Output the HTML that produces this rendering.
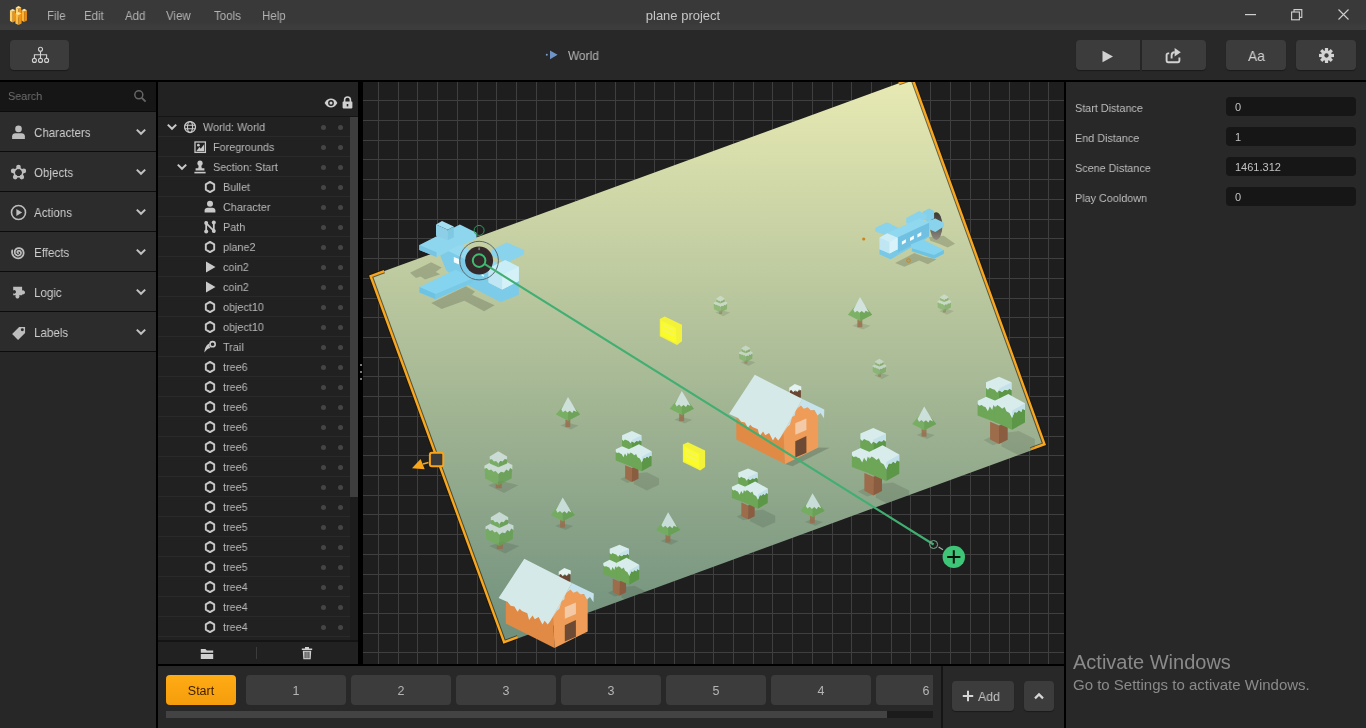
<!DOCTYPE html>
<html><head><meta charset="utf-8"><title>plane project</title>
<style>
*{box-sizing:border-box;margin:0;padding:0}
html,body{width:1366px;height:728px;overflow:hidden;background:#000;font-family:"Liberation Sans",sans-serif;color:#c8c8c8;font-size:12px}
.abs{position:absolute}
.t{display:inline-block;transform:scaleX(.94);transform-origin:0 50%;white-space:nowrap}
#title{left:0;top:0;width:1366px;height:30px;background:linear-gradient(#393939 0,#393939 22px,#3d3d3d 27px,#3c3c3c 30px)}
#title .m{position:absolute;top:8.7px;font-size:12.5px;color:#b2b2b2;line-height:15px;transform:scaleX(.92);transform-origin:0 50%;white-space:nowrap}
#tool{left:0;top:30px;width:1366px;height:50px;background:#282828}
.tb{position:absolute;background:#3c3c3c;border-radius:4px;box-shadow:0 1px 1px rgba(0,0,0,.35)}
#left{left:0;top:82px;width:156px;height:646px;background:#272727}
#lb{left:0;top:29px;width:156px;height:241px;background:#0c0c0c}
#search{left:0;top:0;width:156px;height:29px;background:#161616;color:#6f6f6f;font-size:11px}
.cat{position:absolute;left:0;width:156px;height:39px;background:#2c2c2c;font-size:13px;color:#cdcdcd}
.cat span{position:absolute;left:34px;top:13px;line-height:16px;transform:scaleX(.89)}
#tree{left:158px;top:82px;width:200px;height:582px;background:#212121}
#thead{left:0;top:0;width:200px;height:34px;background:#222}
.row{position:absolute;left:0;width:192px;height:20px;border-bottom:1px solid #2a2a2a;font-size:11.5px;color:#b9b9b9}
.row span{position:absolute;top:3.6px;line-height:13px}
.row i{position:absolute;top:7.5px;width:5px;height:5px;border-radius:3px;background:#454545}
#canvas{left:363px;top:82px;width:701px;height:582px;background:#1e1e1e;overflow:hidden}
#bottom{left:158px;top:666px;width:906px;height:62px;background:#282828}
.sb{position:absolute;top:9px;width:100px;height:30px;border-radius:4px;background:#3c3c3c;color:#b4b4b4;font-size:12.5px;text-align:center;line-height:32px}
#right{left:1066px;top:82px;width:300px;height:646px;background:#282828}
.lbl{position:absolute;left:9px;font-size:11.5px;color:#bebebe;line-height:14px;margin-top:0;transform:scaleX(.94);transform-origin:0 50%;white-space:nowrap}
.inp{position:absolute;left:160px;width:130px;height:19px;border-radius:4px;background:#161616;color:#c2c2c2;font-size:11px;line-height:21px;padding-left:9px}
.t,.lbl,.m,.inp,.sb,.aw{will-change:transform}
</style></head><body>
<div id="title" class="abs"><svg class="abs" style="left:4px;top:2px" width="30" height="26" viewBox="0 0 30 26" ><polygon points="11.75,5.4 14.5,6.8 14.5,15.4 11.75,14" fill="#ffd26e"/><polygon points="14.5,6.8 17.25,5.4 17.25,14 14.5,15.4" fill="#ee9415"/><polygon points="11.75,5.4 14.5,4 17.25,5.4 14.5,6.8" fill="#ffe39a"/><polygon points="5.95,8.3 8.7,9.7 8.7,20.4 5.95,19" fill="#ffd26e"/><polygon points="8.7,9.7 11.45,8.3 11.45,19 8.7,20.4" fill="#ee9415"/><polygon points="5.95,8.3 8.7,6.9 11.45,8.3 8.7,9.7" fill="#ffe39a"/><polygon points="17.45,8.2 20.2,9.6 20.2,20 17.45,18.6" fill="#fbb437"/><polygon points="20.2,9.6 22.95,8.2 22.95,18.6 20.2,20" fill="#e88a10"/><polygon points="17.45,8.2 20.2,6.8 22.95,8.2 20.2,9.6" fill="#ffe39a"/><polygon points="11.4,11.6 14.5,13.1 14.5,23.1 11.4,21.6" fill="#fcbe48"/><polygon points="14.5,13.1 17.6,11.6 17.6,21.6 14.5,23.1" fill="#f09612"/><polygon points="11.4,11.6 14.5,10.1 17.6,11.6 14.5,13.1" fill="#ffe39a"/></svg><svg class="abs" style="left:1245px;top:14px" width="12" height="2" viewBox="0 0 12 2" ><rect x="0" y="0" width="11" height="1.2" fill="#cfcfcf"/></svg><svg class="abs" style="left:1291px;top:9px" width="12" height="12" viewBox="0 0 12 12" ><rect x="0.6" y="3" width="7.8" height="7.8" fill="none" stroke="#cfcfcf" stroke-width="1.1"/><path d="M3 3V0.6h7.8v7.8H8.4" fill="none" stroke="#cfcfcf" stroke-width="1.1"/></svg><svg class="abs" style="left:1338px;top:9px" width="11" height="11" viewBox="0 0 11 11" ><path d="M0.5 0.5L10.5 10.5M10.5 0.5L0.5 10.5" stroke="#cfcfcf" stroke-width="1.1"/></svg>
<span class="m" style="left:46.5px">File</span><span class="m" style="left:83.5px">Edit</span><span class="m" style="left:124.5px">Add</span><span class="m" style="left:166px">View</span><span class="m" style="left:214px">Tools</span><span class="m" style="left:262px">Help</span>
<span class="m" style="left:583px;width:200px;text-align:center;font-size:13px;top:8px;line-height:16px;color:#c6c6c6;transform:none">plane project</span>
</div>
<div id="tool" class="abs">
<div class="tb" style="left:10px;top:10px;width:59px;height:30px"></div>
<div class="tb" style="left:1076px;top:10px;width:64px;height:30px;border-radius:4px 0 0 4px"></div>
<div class="tb" style="left:1142px;top:10px;width:64px;height:30px;border-radius:0 4px 4px 0"></div>
<div class="tb" style="left:1226px;top:10px;width:60px;height:30px"></div>
<div class="tb" style="left:1296px;top:10px;width:60px;height:30px"></div>
<span class="abs t" style="left:568px;top:19px;font-size:12.5px;color:#b8b8b8;line-height:15px;transform:scaleX(.95)">World</span><svg class="abs" style="left:31px;top:16px" width="19" height="18" viewBox="0 0 19 18" ><g fill="none" stroke="#d2d2d2" stroke-width="1.1"><circle cx="9.5" cy="3.2" r="2"/><circle cx="3.4" cy="14.4" r="2"/><circle cx="9.5" cy="14.4" r="2"/><circle cx="15.6" cy="14.4" r="2"/><path d="M9.5 5.2v7.2M3.4 12.4V8.8h12.2v3.6"/></g></svg><svg class="abs" style="left:545px;top:19px" width="14" height="12" viewBox="0 0 14 12" ><circle cx="1.8" cy="5.8" r="1" fill="#7a9fd0"/><polygon points="5,1.4 12.6,5.8 5,10.2" fill="#6f95c8"/></svg><svg class="abs" style="left:1101px;top:19.6px" width="13" height="13" viewBox="0 0 13 13" ><polygon points="1.5,0.8 12,6.5 1.5,12.2" fill="#d2d2d2"/></svg><svg class="abs" style="left:1165px;top:17px" width="18" height="17" viewBox="0 0 18 17" ><path d="M4.2 6.4H3.2a1.6 1.6 0 0 0-1.6 1.6v5.6a1.6 1.6 0 0 0 1.6 1.6h9.6a1.6 1.6 0 0 0 1.6-1.6V10.6" fill="none" stroke="#d2d2d2" stroke-width="1.9"/><path d="M6.6 11.6V8.2c0-1.8 1.2-3 3.2-3" fill="none" stroke="#d2d2d2" stroke-width="1.9"/><polygon points="9.6,1 15.8,5.2 9.6,9.4" fill="#d2d2d2"/></svg><span class="abs t" style="left:1247.5px;top:16.6px;font-size:15px;line-height:18px;color:#d2d2d2;transform:scaleX(.92)">Aa</span><svg class="abs" style="left:1318.6px;top:18.2px" width="15" height="15" viewBox="0 0 16 16" ><g transform="translate(8 8)" fill="#d2d2d2"><circle r="5.6"/><rect x="-1.7" y="-8" width="3.4" height="4" transform="rotate(0)"/><rect x="-1.7" y="-8" width="3.4" height="4" transform="rotate(45)"/><rect x="-1.7" y="-8" width="3.4" height="4" transform="rotate(90)"/><rect x="-1.7" y="-8" width="3.4" height="4" transform="rotate(135)"/><rect x="-1.7" y="-8" width="3.4" height="4" transform="rotate(180)"/><rect x="-1.7" y="-8" width="3.4" height="4" transform="rotate(225)"/><rect x="-1.7" y="-8" width="3.4" height="4" transform="rotate(270)"/><rect x="-1.7" y="-8" width="3.4" height="4" transform="rotate(315)"/><circle r="2.3" fill="#3c3c3c"/></g></svg>
</div>
<div id="left" class="abs">
<div id="lb" class="abs"></div><div id="search" class="abs"><span class="abs t" style="left:8px;top:7px;line-height:14px;font-size:11.5px">Search</span></div>
<svg class="abs" style="left:133px;top:7px" width="14" height="14" viewBox="0 0 14 14" ><circle cx="5.8" cy="5.8" r="4" fill="none" stroke="#666" stroke-width="1.5"/><path d="M8.8 8.8L12.6 12.6" stroke="#666" stroke-width="1.9"/></svg><div class="cat" style="top:30px"><svg class="abs" style="left:9.5px;top:11.5px" width="17" height="17" viewBox="0 0 16 16" ><circle cx="8" cy="4.6" r="3.1" fill="#bdbdbd"/><path d="M2 14v-2.4c0-1.8 1.4-2.8 3-2.8h6c1.6 0 3 1 3 2.8V14z" fill="#bdbdbd"/></svg><span class="t">Characters</span><svg class="abs" style="left:135px;top:15px" width="12" height="10" viewBox="0 0 12 10" ><path d="M1.8 2.6L6 6.8L10.2 2.6" fill="none" stroke="#c2c2c2" stroke-width="2" stroke-linecap="butt"/></svg></div><div class="cat" style="top:70px"><svg class="abs" style="left:9.5px;top:11.5px" width="17" height="17" viewBox="0 0 16 16" ><polygon points="8,3.2 12.6,6.6 10.9,12 5.1,12 3.4,6.6" fill="none" stroke="#bdbdbd" stroke-width="1.5"/><circle cx="8" cy="2.8" r="2.2" fill="#bdbdbd"/><circle cx="13" cy="6.5" r="2.2" fill="#bdbdbd"/><circle cx="11.1" cy="12.3" r="2.2" fill="#bdbdbd"/><circle cx="4.9" cy="12.3" r="2.2" fill="#bdbdbd"/><circle cx="3" cy="6.5" r="2.2" fill="#bdbdbd"/></svg><span class="t">Objects</span><svg class="abs" style="left:135px;top:15px" width="12" height="10" viewBox="0 0 12 10" ><path d="M1.8 2.6L6 6.8L10.2 2.6" fill="none" stroke="#c2c2c2" stroke-width="2" stroke-linecap="butt"/></svg></div><div class="cat" style="top:110px"><svg class="abs" style="left:9.5px;top:11.5px" width="17" height="17" viewBox="0 0 16 16" ><circle cx="8" cy="8" r="6.6" fill="none" stroke="#bdbdbd" stroke-width="1.5"/><polygon points="6,4.8 11.4,8 6,11.2" fill="#bdbdbd"/></svg><span class="t">Actions</span><svg class="abs" style="left:135px;top:15px" width="12" height="10" viewBox="0 0 12 10" ><path d="M1.8 2.6L6 6.8L10.2 2.6" fill="none" stroke="#c2c2c2" stroke-width="2" stroke-linecap="butt"/></svg></div><div class="cat" style="top:150px"><svg class="abs" style="left:9.5px;top:11.5px" width="17" height="17" viewBox="0 0 16 16" ><path d="M7.65 8.49 L7.47 8.45 L7.30 8.36 L7.15 8.22 L7.03 8.02 L6.96 7.78 L6.95 7.51 L7.02 7.22 L7.16 6.94 L7.39 6.70 L7.68 6.50 L8.04 6.37 L8.43 6.33 L8.84 6.39 L9.25 6.56 L9.62 6.83 L9.93 7.19 L10.16 7.64 L10.28 8.15 L10.27 8.69 L10.14 9.24 L9.86 9.75 L9.47 10.21 L8.96 10.58 L8.35 10.82 L7.69 10.92 L7.00 10.86 L6.33 10.63 L5.70 10.25 L5.17 9.71 L4.77 9.05 L4.52 8.29 L4.45 7.47 L4.58 6.64 L4.90 5.84 L5.42 5.12 L6.10 4.53 L6.91 4.10 L7.83 3.86 L8.80 3.84 L9.77 4.04 L10.68 4.48 L11.49 5.12 L12.13 5.95 L12.58 6.93 L12.80 8.00 L12.76 9.12 L12.46 10.22 L11.91 11.24 L11.12 12.12 L10.14 12.81 L9.00 13.27 L7.77 13.45 L6.50 13.34 L5.28 12.94 L4.16 12.26 L3.21 11.32 L2.49 10.17 L2.05 8.87 L1.92 7.48 L2.11 6.08" fill="none" stroke="#bdbdbd" stroke-width="1.7" stroke-linecap="round"/></svg><span class="t">Effects</span><svg class="abs" style="left:135px;top:15px" width="12" height="10" viewBox="0 0 12 10" ><path d="M1.8 2.6L6 6.8L10.2 2.6" fill="none" stroke="#c2c2c2" stroke-width="2" stroke-linecap="butt"/></svg></div><div class="cat" style="top:190px"><svg class="abs" style="left:9.5px;top:11.5px" width="17" height="17" viewBox="0 0 16 16" ><path d="M3 2.6h8.4v3.6a1.9 1.9 0 1 1 0 3.4v1H8.6a1.9 1.9 0 1 1-3.2 0H3V8.8a1.7 1.7 0 1 0 0-2.8z" fill="#bdbdbd"/></svg><span class="t">Logic</span><svg class="abs" style="left:135px;top:15px" width="12" height="10" viewBox="0 0 12 10" ><path d="M1.8 2.6L6 6.8L10.2 2.6" fill="none" stroke="#c2c2c2" stroke-width="2" stroke-linecap="butt"/></svg></div><div class="cat" style="top:230px"><svg class="abs" style="left:9.5px;top:11.5px" width="17" height="17" viewBox="0 0 16 16" ><path d="M2 9.4L8.6 2.8h5.6v5.6L7.6 15z" fill="#bdbdbd"/><circle cx="11.6" cy="5.4" r="1.4" fill="#2b2b2b"/></svg><span class="t">Labels</span><svg class="abs" style="left:135px;top:15px" width="12" height="10" viewBox="0 0 12 10" ><path d="M1.8 2.6L6 6.8L10.2 2.6" fill="none" stroke="#c2c2c2" stroke-width="2" stroke-linecap="butt"/></svg></div>
</div>
<div id="tree" class="abs">
<div id="thead" class="abs"></div>
<svg class="abs" style="left:165.8px;top:16px" width="14" height="10" viewBox="0 0 14 10" ><path d="M0.6 5C2.4 1.8 4.6 0.6 7 0.6S11.6 1.8 13.4 5C11.6 8.2 9.4 9.4 7 9.4S2.4 8.2 0.6 5z" fill="#d0d0d0"/><circle cx="7" cy="5" r="2.9" fill="#212121"/><circle cx="7" cy="5" r="1.5" fill="#d0d0d0"/></svg><svg class="abs" style="left:184.3px;top:14px" width="11" height="13" viewBox="0 0 11 13" ><path d="M2.6 6V3.8C2.6 2 3.8 1 5.5 1S8.4 2 8.4 3.8V6" fill="none" stroke="#d0d0d0" stroke-width="1.6"/><rect x="0.6" y="5.6" width="9.8" height="6.8" rx="0.8" fill="#d0d0d0"/><rect x="4.7" y="8" width="1.6" height="2.4" fill="#212121"/></svg><div class="abs" style="left:0;top:34px;width:200px;height:1px;background:#151515"></div><div class="abs" style="left:192px;top:35px;width:8px;height:523px;background:#1d1d1d"></div><div class="abs" style="left:192px;top:35px;width:8px;height:380px;background:#3e3e3e"></div><div class="row" style="top:35px"><svg class="abs" style="left:8.3px;top:5px" width="12" height="10" viewBox="0 0 12 10" ><path d="M1.8 2.6L6 6.8L10.2 2.6" fill="none" stroke="#c9c9c9" stroke-width="2" stroke-linecap="butt"/></svg><svg class="abs" style="left:24.86px;top:2.96px" width="14.08" height="14.08" viewBox="0 0 16 16" ><circle cx="8" cy="8" r="6.2" fill="none" stroke="#c9c9c9" stroke-width="1.5"/><ellipse cx="8" cy="8" rx="2.9" ry="6.2" fill="none" stroke="#c9c9c9" stroke-width="1.3"/><path d="M2 6h12M2 10h12" stroke="#c9c9c9" stroke-width="1.3" fill="none"/></svg><span class="t" style="left:44.5px">World: World</span><i style="left:163px"></i><i style="left:180px"></i></div><div class="row" style="top:55px"><svg class="abs" style="left:34.8px;top:2.8px" width="14.4" height="14.4" viewBox="0 0 16 16" ><rect x="2.2" y="2.2" width="11.6" height="11.6" fill="none" stroke="#c9c9c9" stroke-width="1.4"/><circle cx="6" cy="5.8" r="1.5" fill="#c9c9c9"/><polygon points="3.6,12.4 7.2,7.8 8.6,9.8 12.4,4.8 12.4,12.4" fill="#c9c9c9"/></svg><span class="t" style="left:54.6px">Foregrounds</span><i style="left:163px"></i><i style="left:180px"></i></div><div class="row" style="top:75px"><svg class="abs" style="left:18.4px;top:5px" width="12" height="10" viewBox="0 0 12 10" ><path d="M1.8 2.6L6 6.8L10.2 2.6" fill="none" stroke="#c9c9c9" stroke-width="2" stroke-linecap="butt"/></svg><svg class="abs" style="left:34px;top:2px" width="16" height="16" viewBox="0 0 16 16" ><circle cx="8" cy="4.2" r="2.6" fill="#c9c9c9"/><path d="M6.8 6h2.4l0.6 3.2h2.6v2.4H3.6V9.2h2.6z" fill="#c9c9c9"/><rect x="2.4" y="12.8" width="11.2" height="1.6" fill="#c9c9c9"/></svg><span class="t" style="left:54.6px">Section: Start</span><i style="left:163px"></i><i style="left:180px"></i></div><div class="row" style="top:95px"><svg class="abs" style="left:44px;top:2px" width="16" height="16" viewBox="0 0 16 16" ><polygon points="8,2.9 12.2,5.4 12.2,10.6 8,13.1 3.8,10.6 3.8,5.4" fill="none" stroke="#c9c9c9" stroke-width="1.9" stroke-linejoin="round"/></svg><span class="t" style="left:64.6px">Bullet</span><i style="left:163px"></i><i style="left:180px"></i></div><div class="row" style="top:115px"><svg class="abs" style="left:44px;top:2px" width="16" height="16" viewBox="0 0 16 16" ><circle cx="8" cy="4.8" r="3" fill="#c9c9c9"/><path d="M2.6 13.6v-2.2c0-1.6 1.4-2.6 3-2.6h4.8c1.6 0 3 1 3 2.6v2.2z" fill="#c9c9c9"/></svg><span class="t" style="left:64.6px">Character</span><i style="left:163px"></i><i style="left:180px"></i></div><div class="row" style="top:135px"><svg class="abs" style="left:44px;top:2px" width="16" height="16" viewBox="0 0 16 16" ><path d="M4.2 12.5V4.2L11.8 11.8V3.6" fill="none" stroke="#c9c9c9" stroke-width="1.8"/><circle cx="4.2" cy="12.6" r="2" fill="#c9c9c9"/><circle cx="4.2" cy="4" r="2" fill="#c9c9c9"/><circle cx="11.8" cy="12" r="2" fill="#c9c9c9"/><circle cx="11.8" cy="3.6" r="2" fill="#c9c9c9"/></svg><span class="t" style="left:64.6px">Path</span><i style="left:163px"></i><i style="left:180px"></i></div><div class="row" style="top:155px"><svg class="abs" style="left:44px;top:2px" width="16" height="16" viewBox="0 0 16 16" ><polygon points="8,2.9 12.2,5.4 12.2,10.6 8,13.1 3.8,10.6 3.8,5.4" fill="none" stroke="#c9c9c9" stroke-width="1.9" stroke-linejoin="round"/></svg><span class="t" style="left:64.6px">plane2</span><i style="left:163px"></i><i style="left:180px"></i></div><div class="row" style="top:175px"><svg class="abs" style="left:44px;top:2px" width="16" height="16" viewBox="0 0 16 16" ><polygon points="4,2.5 13.5,8 4,13.5" fill="#c9c9c9"/></svg><span class="t" style="left:64.6px">coin2</span><i style="left:163px"></i><i style="left:180px"></i></div><div class="row" style="top:195px"><svg class="abs" style="left:44px;top:2px" width="16" height="16" viewBox="0 0 16 16" ><polygon points="4,2.5 13.5,8 4,13.5" fill="#c9c9c9"/></svg><span class="t" style="left:64.6px">coin2</span><i style="left:163px"></i><i style="left:180px"></i></div><div class="row" style="top:215px"><svg class="abs" style="left:44px;top:2px" width="16" height="16" viewBox="0 0 16 16" ><polygon points="8,2.9 12.2,5.4 12.2,10.6 8,13.1 3.8,10.6 3.8,5.4" fill="none" stroke="#c9c9c9" stroke-width="1.9" stroke-linejoin="round"/></svg><span class="t" style="left:64.6px">object10</span><i style="left:163px"></i><i style="left:180px"></i></div><div class="row" style="top:235px"><svg class="abs" style="left:44px;top:2px" width="16" height="16" viewBox="0 0 16 16" ><polygon points="8,2.9 12.2,5.4 12.2,10.6 8,13.1 3.8,10.6 3.8,5.4" fill="none" stroke="#c9c9c9" stroke-width="1.9" stroke-linejoin="round"/></svg><span class="t" style="left:64.6px">object10</span><i style="left:163px"></i><i style="left:180px"></i></div><div class="row" style="top:255px"><svg class="abs" style="left:44px;top:2px" width="16" height="16" viewBox="0 0 16 16" ><circle cx="10.6" cy="5.2" r="2.6" fill="none" stroke="#c9c9c9" stroke-width="1.6"/><path d="M2.4 13.6c0.2-4.6 2-8.2 5.6-9.4c-1 1.6-0.8 3.6 0.6 4.8c-3 0.4-4.6 2.2-6.2 4.6z" fill="#c9c9c9"/></svg><span class="t" style="left:64.6px">Trail</span><i style="left:163px"></i><i style="left:180px"></i></div><div class="row" style="top:275px"><svg class="abs" style="left:44px;top:2px" width="16" height="16" viewBox="0 0 16 16" ><polygon points="8,2.9 12.2,5.4 12.2,10.6 8,13.1 3.8,10.6 3.8,5.4" fill="none" stroke="#c9c9c9" stroke-width="1.9" stroke-linejoin="round"/></svg><span class="t" style="left:64.6px">tree6</span><i style="left:163px"></i><i style="left:180px"></i></div><div class="row" style="top:295px"><svg class="abs" style="left:44px;top:2px" width="16" height="16" viewBox="0 0 16 16" ><polygon points="8,2.9 12.2,5.4 12.2,10.6 8,13.1 3.8,10.6 3.8,5.4" fill="none" stroke="#c9c9c9" stroke-width="1.9" stroke-linejoin="round"/></svg><span class="t" style="left:64.6px">tree6</span><i style="left:163px"></i><i style="left:180px"></i></div><div class="row" style="top:315px"><svg class="abs" style="left:44px;top:2px" width="16" height="16" viewBox="0 0 16 16" ><polygon points="8,2.9 12.2,5.4 12.2,10.6 8,13.1 3.8,10.6 3.8,5.4" fill="none" stroke="#c9c9c9" stroke-width="1.9" stroke-linejoin="round"/></svg><span class="t" style="left:64.6px">tree6</span><i style="left:163px"></i><i style="left:180px"></i></div><div class="row" style="top:335px"><svg class="abs" style="left:44px;top:2px" width="16" height="16" viewBox="0 0 16 16" ><polygon points="8,2.9 12.2,5.4 12.2,10.6 8,13.1 3.8,10.6 3.8,5.4" fill="none" stroke="#c9c9c9" stroke-width="1.9" stroke-linejoin="round"/></svg><span class="t" style="left:64.6px">tree6</span><i style="left:163px"></i><i style="left:180px"></i></div><div class="row" style="top:355px"><svg class="abs" style="left:44px;top:2px" width="16" height="16" viewBox="0 0 16 16" ><polygon points="8,2.9 12.2,5.4 12.2,10.6 8,13.1 3.8,10.6 3.8,5.4" fill="none" stroke="#c9c9c9" stroke-width="1.9" stroke-linejoin="round"/></svg><span class="t" style="left:64.6px">tree6</span><i style="left:163px"></i><i style="left:180px"></i></div><div class="row" style="top:375px"><svg class="abs" style="left:44px;top:2px" width="16" height="16" viewBox="0 0 16 16" ><polygon points="8,2.9 12.2,5.4 12.2,10.6 8,13.1 3.8,10.6 3.8,5.4" fill="none" stroke="#c9c9c9" stroke-width="1.9" stroke-linejoin="round"/></svg><span class="t" style="left:64.6px">tree6</span><i style="left:163px"></i><i style="left:180px"></i></div><div class="row" style="top:395px"><svg class="abs" style="left:44px;top:2px" width="16" height="16" viewBox="0 0 16 16" ><polygon points="8,2.9 12.2,5.4 12.2,10.6 8,13.1 3.8,10.6 3.8,5.4" fill="none" stroke="#c9c9c9" stroke-width="1.9" stroke-linejoin="round"/></svg><span class="t" style="left:64.6px">tree5</span><i style="left:163px"></i><i style="left:180px"></i></div><div class="row" style="top:415px"><svg class="abs" style="left:44px;top:2px" width="16" height="16" viewBox="0 0 16 16" ><polygon points="8,2.9 12.2,5.4 12.2,10.6 8,13.1 3.8,10.6 3.8,5.4" fill="none" stroke="#c9c9c9" stroke-width="1.9" stroke-linejoin="round"/></svg><span class="t" style="left:64.6px">tree5</span><i style="left:163px"></i><i style="left:180px"></i></div><div class="row" style="top:435px"><svg class="abs" style="left:44px;top:2px" width="16" height="16" viewBox="0 0 16 16" ><polygon points="8,2.9 12.2,5.4 12.2,10.6 8,13.1 3.8,10.6 3.8,5.4" fill="none" stroke="#c9c9c9" stroke-width="1.9" stroke-linejoin="round"/></svg><span class="t" style="left:64.6px">tree5</span><i style="left:163px"></i><i style="left:180px"></i></div><div class="row" style="top:455px"><svg class="abs" style="left:44px;top:2px" width="16" height="16" viewBox="0 0 16 16" ><polygon points="8,2.9 12.2,5.4 12.2,10.6 8,13.1 3.8,10.6 3.8,5.4" fill="none" stroke="#c9c9c9" stroke-width="1.9" stroke-linejoin="round"/></svg><span class="t" style="left:64.6px">tree5</span><i style="left:163px"></i><i style="left:180px"></i></div><div class="row" style="top:475px"><svg class="abs" style="left:44px;top:2px" width="16" height="16" viewBox="0 0 16 16" ><polygon points="8,2.9 12.2,5.4 12.2,10.6 8,13.1 3.8,10.6 3.8,5.4" fill="none" stroke="#c9c9c9" stroke-width="1.9" stroke-linejoin="round"/></svg><span class="t" style="left:64.6px">tree5</span><i style="left:163px"></i><i style="left:180px"></i></div><div class="row" style="top:495px"><svg class="abs" style="left:44px;top:2px" width="16" height="16" viewBox="0 0 16 16" ><polygon points="8,2.9 12.2,5.4 12.2,10.6 8,13.1 3.8,10.6 3.8,5.4" fill="none" stroke="#c9c9c9" stroke-width="1.9" stroke-linejoin="round"/></svg><span class="t" style="left:64.6px">tree4</span><i style="left:163px"></i><i style="left:180px"></i></div><div class="row" style="top:515px"><svg class="abs" style="left:44px;top:2px" width="16" height="16" viewBox="0 0 16 16" ><polygon points="8,2.9 12.2,5.4 12.2,10.6 8,13.1 3.8,10.6 3.8,5.4" fill="none" stroke="#c9c9c9" stroke-width="1.9" stroke-linejoin="round"/></svg><span class="t" style="left:64.6px">tree4</span><i style="left:163px"></i><i style="left:180px"></i></div><div class="row" style="top:535px"><svg class="abs" style="left:44px;top:2px" width="16" height="16" viewBox="0 0 16 16" ><polygon points="8,2.9 12.2,5.4 12.2,10.6 8,13.1 3.8,10.6 3.8,5.4" fill="none" stroke="#c9c9c9" stroke-width="1.9" stroke-linejoin="round"/></svg><span class="t" style="left:64.6px">tree4</span><i style="left:163px"></i><i style="left:180px"></i></div><div class="abs" style="left:0;top:558px;width:200px;height:2px;background:#141414"></div><div class="abs" style="left:0;top:560px;width:200px;height:22px;background:#212121"></div><div class="abs" style="left:98px;top:565px;width:1px;height:12px;background:#3c3c3c"></div><svg class="abs" style="left:42px;top:565.5px" width="14" height="12" viewBox="0 0 14 12" ><path d="M0.8 1h4.6l1.4 1.6h6.4v2.2H0.8z" fill="#cfcfcf"/><rect x="0.8" y="6" width="12.4" height="5" fill="#cfcfcf"/></svg><svg class="abs" style="left:142.5px;top:564px" width="12" height="14" viewBox="0 0 12 14" ><path d="M0.8 2.6h10.4v1.4H0.8zM4 1h4v1.6H4z" fill="#cfcfcf"/><path d="M1.8 4.8h8.4l-0.5 8.4H2.3z" fill="#cfcfcf"/><path d="M4.1 5.8v6.4M6 5.8v6.4M7.9 5.8v6.4" stroke="#212121" stroke-width="0.9"/></svg>
</div>
<div id="dots" class="abs" style="left:360px;top:364px;width:2px;height:16px"><i class="abs" style="left:0;top:0;width:2px;height:2px;background:#7a7a7a"></i><i class="abs" style="left:0;top:7px;width:2px;height:2px;background:#7a7a7a"></i><i class="abs" style="left:0;top:14px;width:2px;height:2px;background:#7a7a7a"></i></div>
<div id="canvas" class="abs">
<svg width="701" height="582" viewBox="363 82 701 582" style="position:absolute;left:0;top:0"><defs><linearGradient id="bg" gradientUnits="userSpaceOnUse" x1="0" y1="77" x2="0" y2="645"><stop offset="0" stop-color="#e8eab3"/><stop offset="1" stop-color="#6f8f7c"/></linearGradient><g id="house"><polygon points="16.3,52.9 63.5,66.5 65.0,99.0 16.3,74.4" fill="#e08a45" /><polygon points="63.5,66.5 75.6,43.8 82.4,37.8 98.2,48.1 98.2,82.4 65.0,99.0" fill="#ee9c58" /><polygon points="75.3,58.2 86.4,53.6 86.4,65.0 75.3,69.8" fill="#f4caa6" /><polygon points="75.3,76.3 86.4,71.0 86.4,87.7 75.3,92.5" fill="#6d4a33" /><polygon points="70.0,24.2 75.6,26.4 80.9,24.9 80.9,32.5 75.6,34.0 70.0,29.5" fill="#6a4632" /><polygon points="69.2,22.7 74.8,18.9 81.3,21.6 81.3,25.4 78.9,24.2 77.4,26.9 75.3,24.9 73.3,27.2 71.3,24.9 69.2,26.0" fill="#e4f1f1" /><polygon points="82.4,34.0 104.3,44.6 104.0,53.2 100.5,48.1 97.5,50.6 94.5,45.0 90.7,45.3 87.7,42.3 83.9,43.8 80.9,40.5 77.8,43.1 75.6,45.3 74.8,50.6 72.2,52.1 69.8,59.7 67.3,62.0 64.2,66.5 60.5,72.5" fill="#c6e2ec" /><polygon points="34.8,9.8 82.4,34.0 60.5,72.5 58.2,75.6 55.2,71.8 52.9,75.6 49.1,68.0 45.3,70.3 43.1,66.5 39.6,71.0 37.8,64.2 32.5,62.0 30.2,59.7 28.0,62.7 24.9,57.4 21.2,56.7 18.1,52.9 9.1,49.1" fill="#d5e9e9" /></g><g id="house_s"><polygon points="65.0,99.0 98.2,82.4 109.6,82.8 72.5,101.3" fill="#000" opacity=".16"/></g><g id="bt"><polygon points="29.4,58.1 38.3,61.8 38.3,80.4 29.4,75.7" fill="#9c6c4b" /><polygon points="38.3,61.8 47.0,58.1 47.0,76.0 38.3,80.4" fill="#8b5d40" /><polygon points="16.9,37.1 25.3,33.1 35.9,37.1 35.9,59.1 16.9,51.9" fill="#6ca656" /><polygon points="25.3,18.5 38.3,24.7 38.3,39.6 25.3,34.0" fill="#6ba555" /><polygon points="38.3,24.7 50.9,18.5 50.9,32.1 38.3,39.6" fill="#5c9748" /><polygon points="34.0,37.1 51.3,47.0 51.3,66.1 34.0,58.4" fill="#6ca656" /><polygon points="51.3,47.0 64.3,39.6 64.3,58.7 51.3,66.1" fill="#5c9748" /><polygon points="16.9,37.1 25.3,33.1 34.6,37.1 34.6,43.9 32.8,41.4 31.5,46.4 29.1,42.7 27.2,47.6 24.7,43.3 22.9,42.7 21.0,41.4 18.5,42.0 16.9,40.2" fill="#d8ecec" /><polygon points="25.3,18.5 38.3,13.0 50.9,18.5 50.9,26.6 48.8,24.7 47.0,26.6 43.9,26.0 41.4,28.4 38.3,26.6 36.5,29.1 34.0,26.0 31.5,25.3 29.1,24.1 27.2,26.0 25.3,24.1" fill="#d8ecec" /><polygon points="38.3,24.7 50.9,18.5 50.9,26.6 48.8,24.7 47.0,26.6 43.9,26.0 41.4,28.4 38.3,26.6" fill="#c5e2ea" /><polygon points="34.0,37.1 47.6,30.3 64.3,39.6 64.3,46.4 61.8,45.1 60.6,48.2 58.1,46.4 56.2,48.8 53.8,48.2 51.3,54.4 48.8,49.4 45.7,47.6 43.9,43.3 41.4,45.1 38.9,42.7 36.5,41.4 35.2,43.3 34.0,41.4" fill="#d8ecec" /><polygon points="51.3,47.0 64.3,39.6 64.3,46.4 61.8,45.1 60.6,48.2 58.1,46.4 56.2,48.8 53.8,48.2 51.3,54.4" fill="#c2e0ea" /></g><g id="bt_s"><polygon points="22.9,76.4 37.1,69.8 58.1,67.4 74.2,75.4 74.2,84.1 58.1,91.5 40.8,82.8 40.8,79.1 32.1,81.6" fill="#000" opacity=".10"/></g><g id="pine"><polygon points="9.5,22.7 14.4,22.7 14.4,30.2 9.5,30.2" fill="#9a6b4a" /><polygon points="0.0,17.7 12.1,3.0 24.2,17.7 12.1,23.9" fill="#6fae58" /><polygon points="12.1,3.0 24.2,17.7 12.1,23.9" fill="#62a04c" /><polygon points="12.1,0.0 18.9,11.3 20.9,15.1 17.8,13.6 16.3,16.0 13.9,13.9 11.5,15.7 9.4,13.6 7.0,15.4 5.4,12.7" fill="#d8ebec" /></g><g id="pine_s"><polygon points="4.5,28.7 11.3,25.7 22.7,28.7 15.1,32.5" fill="#000" opacity=".10"/></g><g id="tt"><polygon points="11.3,30.2 17.4,30.2 17.4,37.0 11.3,37.0" fill="#9a6b4a" /><polygon points="0.0,15.1 13.9,21.2 13.9,34.0 0.8,27.2" fill="#6fae58" /><polygon points="13.9,21.2 28.0,14.4 27.2,27.2 13.9,34.0" fill="#62a04c" /><polygon points="0.0,14.4 13.9,6.8 28.0,13.6 28.0,18.1 25.7,16.6 24.2,19.6 21.9,18.1 19.6,21.2 16.6,20.4 13.9,22.7 11.3,19.6 9.1,20.4 6.8,18.1 4.5,18.9 2.3,16.6 0.0,17.4" fill="#dcecec" /><polygon points="5.3,6.0 13.9,10.6 13.9,15.9 5.3,12.1" fill="#6fae58" /><polygon points="13.9,10.6 22.7,6.0 22.7,12.1 13.9,15.9" fill="#62a04c" /><polygon points="5.3,5.3 13.9,0.0 22.7,5.3 22.7,8.3 20.4,7.6 18.1,10.3 15.9,9.4 13.9,12.1 11.8,9.8 9.4,10.3 7.6,7.9 5.3,8.3" fill="#dcecec" /></g><g id="tt_s"><polygon points="3.8,34.0 16.6,29.5 34.0,34.0 19.6,41.6" fill="#000" opacity=".10"/></g><g id="coin"><polygon points="19.8,18.9 24.7,16.5 42.0,24.7 42.0,41.2 37.1,44.9 19.8,36.2" fill="#f2f23a" /><polygon points="21.0,20.6 36.2,28.0 36.2,42.8 21.0,35.4" fill="#fbfb28" /><polygon points="22.7,23.5 34.6,29.2 34.6,31.7 22.7,25.9" fill="#f6f65a" /><polygon points="22.7,28.4 34.6,34.2 34.6,36.7 22.7,30.9" fill="#f6f65a" /></g><g id="coin_s"></g><clipPath id="quad"><polygon points="370.6,276.1 912.4,78.3 1044.9,445.3 504.5,643.3"/></clipPath><linearGradient id="prop" x1="0" y1="0" x2="0" y2="1"><stop offset="0" stop-color="#3c3a36"/><stop offset=".45" stop-color="#5a5650"/><stop offset="1" stop-color="#8f8a80"/></linearGradient></defs><g fill="#3f3f3f" shape-rendering="crispEdges"><rect x="358" y="82" width="1" height="582"/><rect x="378" y="82" width="1" height="582"/><rect x="398" y="82" width="1" height="582"/><rect x="417" y="82" width="1" height="582"/><rect x="437" y="82" width="1" height="582"/><rect x="457" y="82" width="1" height="582"/><rect x="477" y="82" width="1" height="582"/><rect x="496" y="82" width="1" height="582"/><rect x="516" y="82" width="1" height="582"/><rect x="536" y="82" width="1" height="582"/><rect x="555" y="82" width="1" height="582"/><rect x="575" y="82" width="1" height="582"/><rect x="595" y="82" width="1" height="582"/><rect x="615" y="82" width="1" height="582"/><rect x="634" y="82" width="1" height="582"/><rect x="654" y="82" width="1" height="582"/><rect x="674" y="82" width="1" height="582"/><rect x="694" y="82" width="1" height="582"/><rect x="713" y="82" width="1" height="582"/><rect x="733" y="82" width="1" height="582"/><rect x="753" y="82" width="1" height="582"/><rect x="772" y="82" width="1" height="582"/><rect x="792" y="82" width="1" height="582"/><rect x="812" y="82" width="1" height="582"/><rect x="832" y="82" width="1" height="582"/><rect x="851" y="82" width="1" height="582"/><rect x="871" y="82" width="1" height="582"/><rect x="891" y="82" width="1" height="582"/><rect x="910" y="82" width="1" height="582"/><rect x="930" y="82" width="1" height="582"/><rect x="950" y="82" width="1" height="582"/><rect x="970" y="82" width="1" height="582"/><rect x="989" y="82" width="1" height="582"/><rect x="1009" y="82" width="1" height="582"/><rect x="1029" y="82" width="1" height="582"/><rect x="1048" y="82" width="1" height="582"/><rect x="363" y="81" width="701" height="1"/><rect x="363" y="100" width="701" height="1"/><rect x="363" y="120" width="701" height="1"/><rect x="363" y="140" width="701" height="1"/><rect x="363" y="159" width="701" height="1"/><rect x="363" y="179" width="701" height="1"/><rect x="363" y="199" width="701" height="1"/><rect x="363" y="219" width="701" height="1"/><rect x="363" y="238" width="701" height="1"/><rect x="363" y="258" width="701" height="1"/><rect x="363" y="278" width="701" height="1"/><rect x="363" y="298" width="701" height="1"/><rect x="363" y="317" width="701" height="1"/><rect x="363" y="337" width="701" height="1"/><rect x="363" y="357" width="701" height="1"/><rect x="363" y="376" width="701" height="1"/><rect x="363" y="396" width="701" height="1"/><rect x="363" y="416" width="701" height="1"/><rect x="363" y="436" width="701" height="1"/><rect x="363" y="455" width="701" height="1"/><rect x="363" y="475" width="701" height="1"/><rect x="363" y="495" width="701" height="1"/><rect x="363" y="514" width="701" height="1"/><rect x="363" y="534" width="701" height="1"/><rect x="363" y="554" width="701" height="1"/><rect x="363" y="574" width="701" height="1"/><rect x="363" y="593" width="701" height="1"/><rect x="363" y="613" width="701" height="1"/><rect x="363" y="633" width="701" height="1"/><rect x="363" y="652" width="701" height="1"/></g><polygon points="370.6,276.1 912.4,78.3 1044.9,445.3 504.5,643.3" fill="url(#bg)" /><polyline points="384.2,271.1 370.6,276.1 504.1,642.2 517.7,637.2" fill="none" stroke="#1a1200" stroke-opacity=".6" stroke-width="4.4" stroke-linejoin="miter"/><polyline points="384.2,271.1 370.6,276.1 504.1,642.2 517.7,637.2" fill="none" stroke="#f9a620" stroke-width="2.4" stroke-linejoin="miter"/><polyline points="898.8,83.3 912.4,78.3 1044.5,444.2 1030.9,449.2" fill="none" stroke="#1a1200" stroke-opacity=".6" stroke-width="4.4" stroke-linejoin="miter"/><polyline points="898.8,83.3 912.4,78.3 1044.5,444.2 1030.9,449.2" fill="none" stroke="#f9a620" stroke-width="2.4" stroke-linejoin="miter"/><g clip-path="url(#quad)"><g transform="translate(713.6 295.8) scale(0.490)" ><use href="#tt_s"/></g><g transform="translate(738.9 345.5) scale(0.490)" ><use href="#tt_s"/></g><g transform="translate(937.4 294.3) scale(0.490)" ><use href="#tt_s"/></g><g transform="translate(872.5 358.7) scale(0.490)" ><use href="#tt_s"/></g><g transform="translate(555.9 396.9) scale(1.000)" ><use href="#pine_s"/></g><g transform="translate(669.7 391.0) scale(1.000)" ><use href="#pine_s"/></g><g transform="translate(847.9 297.1) scale(1.000)" ><use href="#pine_s"/></g><g transform="translate(912.1 406.4) scale(1.000)" ><use href="#pine_s"/></g><g transform="translate(550.6 497.4) scale(1.000)" ><use href="#pine_s"/></g><g transform="translate(656.0 512.2) scale(1.000)" ><use href="#pine_s"/></g><g transform="translate(800.4 493.2) scale(1.000)" ><use href="#pine_s"/></g><g transform="translate(484.4 451.3) scale(1.000)" ><use href="#tt_s"/></g><g transform="translate(485.5 512.0) scale(1.000)" ><use href="#tt_s"/></g><g transform="translate(640.0 300.0) scale(1.000)" ><use href="#coin_s"/></g><g transform="translate(663.1 425.7) scale(1.000)" ><use href="#coin_s"/></g><g transform="translate(720.0 365.0) scale(1.000)" ><use href="#house_s"/></g><g transform="translate(960.7 363.7) scale(1.000)" ><use href="#bt_s"/></g><g transform="translate(835.0 415.0) scale(1.000)" ><use href="#bt_s"/></g><g transform="translate(602.9 421.2) scale(0.757)" ><use href="#bt_s"/></g><g transform="translate(719.1 458.6) scale(0.757)" ><use href="#bt_s"/></g><g transform="translate(590.5 534.8) scale(0.757)" ><use href="#bt_s"/></g><g transform="translate(489.5 549.0) scale(1.000)" ><use href="#house_s"/></g><g transform="translate(850.0 195.0) scale(1.000)" ><polygon points="45.1,68.0 64.3,58.1 74.2,61.8 86.5,64.3 77.9,69.2 69.2,65.5 54.4,71.7" fill="#000" opacity=".17"/><polygon points="79.1,42.0 93.9,40.8 105.1,48.8 97.7,52.5 89.0,48.8 80.3,45.7" fill="#000" opacity=".17"/></g><g transform="translate(410.0 210.0) scale(1.000)" ><polygon points="0.0,62.7 21.2,52.2 31.7,57.4 25.7,62.0 30.2,64.2 15.1,69.5 10.6,66.5 6.0,68.0" fill="#000" opacity=".17"/><polygon points="21.2,93.0 55.9,76.3 65.0,81.6 62.0,84.7 84.7,95.2 74.1,101.3 54.4,90.7 31.7,99.0" fill="#000" opacity=".17"/></g></g><g transform="translate(713.6 295.8) scale(0.490)" opacity="0.5"><use href="#tt"/></g><g transform="translate(738.9 345.5) scale(0.490)" opacity="0.5"><use href="#tt"/></g><g transform="translate(937.4 294.3) scale(0.490)" opacity="0.5"><use href="#tt"/></g><g transform="translate(872.5 358.7) scale(0.490)" opacity="0.5"><use href="#tt"/></g><g transform="translate(555.9 396.9) scale(1.000)" opacity="0.8"><use href="#pine"/></g><g transform="translate(669.7 391.0) scale(1.000)" opacity="0.8"><use href="#pine"/></g><g transform="translate(847.9 297.1) scale(1.000)" opacity="0.8"><use href="#pine"/></g><g transform="translate(912.1 406.4) scale(1.000)" opacity="0.8"><use href="#pine"/></g><g transform="translate(550.6 497.4) scale(1.000)" opacity="0.8"><use href="#pine"/></g><g transform="translate(656.0 512.2) scale(1.000)" opacity="0.8"><use href="#pine"/></g><g transform="translate(800.4 493.2) scale(1.000)" opacity="0.8"><use href="#pine"/></g><g transform="translate(484.4 451.3) scale(1.000)" opacity="0.74"><use href="#tt"/></g><g transform="translate(485.5 512.0) scale(1.000)" opacity="0.74"><use href="#tt"/></g><g transform="translate(640.0 300.0) scale(1.000)" ><use href="#coin"/></g><g transform="translate(663.1 425.7) scale(1.000)" ><use href="#coin"/></g><g transform="translate(720.0 365.0) scale(1.000)" ><use href="#house"/></g><g transform="translate(960.7 363.7) scale(1.000)" ><use href="#bt"/></g><g transform="translate(835.0 415.0) scale(1.000)" ><use href="#bt"/></g><g transform="translate(602.9 421.2) scale(0.757)" ><use href="#bt"/></g><g transform="translate(719.1 458.6) scale(0.757)" ><use href="#bt"/></g><g transform="translate(590.5 534.8) scale(0.757)" ><use href="#bt"/></g><g transform="translate(489.5 549.0) scale(1.000)" ><use href="#house"/></g><g transform="translate(850.0 195.0) scale(1.000)" ><ellipse cx="86.2" cy="31.1" rx="6.2" ry="13.8" fill="url(#prop)"/><polygon points="72.9,16.7 79.1,13.6 84.1,16.1 84.1,23.5 77.9,26.6 72.9,24.1" fill="#84cfea" /><polygon points="56.2,22.9 69.2,16.1 76.6,19.8 76.6,23.5 61.8,30.9 56.2,27.8" fill="#8ad3ec" /><polygon points="74.2,27.2 85.3,23.5 93.9,27.8 93.9,31.5 85.3,37.1 74.2,32.1" fill="#8ad3ec" /><polygon points="25.3,32.8 37.1,27.2 48.2,32.8 48.2,35.8 37.1,40.8 25.3,36.5" fill="#8ad3ec" /><polygon points="29.7,48.2 69.2,28.4 79.1,33.4 79.1,42.0 40.8,64.3 29.7,59.3" fill="#7ccbe8" /><polygon points="37.1,38.3 69.2,23.5 79.1,27.8 47.6,42.6" fill="#90d8f0" /><polygon points="47.6,42.6 79.1,27.8 79.1,40.8 47.6,58.1" fill="#70c0e2" /><polygon points="60.6,49.4 72.9,44.5 93.9,55.0 93.9,58.7 84.1,63.7 61.8,53.2" fill="#84d4f0" /><polygon points="61.8,53.2 84.1,60.0 93.9,55.0 93.9,58.7 84.1,63.7 61.8,56.2" fill="#6ec2e2" /><polygon points="29.7,42.6 37.1,38.3 47.6,42.6 47.6,54.4 39.6,58.7 29.7,54.4" fill="#cdeef7" /><polygon points="29.7,42.6 39.6,47.0 39.6,58.7 29.7,54.4" fill="#bfe6f2" /><polygon points="39.6,47.0 47.6,42.6 47.6,54.4 39.6,58.7" fill="#d8f2f9" /><polygon points="29.7,54.4 39.6,58.7 47.6,54.4 47.6,59.3 40.8,64.3 29.7,59.3" fill="#78c8e6" /><polygon points="51.9,46.4 55.9,44.3 55.9,47.6 51.9,49.7" fill="#f4fcfe" /><polygon points="60.0,42.7 63.9,40.6 63.9,43.9 60.0,46.0" fill="#f4fcfe" /><polygon points="67.4,39.2 71.3,37.1 71.3,40.5 67.4,42.6" fill="#f4fcfe" /></g><circle cx="863.7" cy="239" r="1.6" fill="#c9861e"/><circle cx="908.5" cy="260.5" r="1.8" fill="none" stroke="#c9861e" stroke-width="1"/><g transform="translate(410.0 210.0) scale(1.000)" ><polygon points="9.4,35.1 49.9,14.4 66.5,22.7 66.5,28.7 26.5,46.9 9.4,40.1" fill="#8ed6ee" /><polygon points="9.4,35.1 26.5,42.3 26.5,46.9 9.4,40.1" fill="#78c4e2" /><polygon points="26.0,14.4 32.0,10.9 43.8,16.6 37.8,19.7" fill="#a4dff2" /><polygon points="26.0,14.4 37.8,19.7 37.8,30.2 26.0,25.7" fill="#8ccfe6" /><polygon points="37.8,19.7 43.8,16.6 43.8,27.2 37.8,30.2" fill="#7fc8e2" /><polygon points="30.2,45.4 49.9,35.5 90.7,55.9 108.8,65.0 108.8,84.7 90.7,92.2 49.9,71.1 36.3,60.5" fill="#7ccbe8" /><polygon points="37.8,40.8 49.9,34.8 96.7,57.4 84.7,63.5" fill="#93d9f0" /><polygon points="81.6,40.1 96.7,32.5 114.1,40.1 114.1,44.6 96.7,52.9 81.6,45.4" fill="#8ad3ec" /><polygon points="9.4,77.1 45.4,59.7 63.5,68.0 63.5,72.6 25.7,89.2 9.4,82.4" fill="#84d4f0" /><polygon points="9.4,77.1 25.7,83.9 25.7,89.2 9.4,82.4" fill="#6ec2e2" /><polygon points="25.7,83.9 63.5,68.0 63.5,72.6 25.7,89.2" fill="#78c9e6" /><polygon points="78.6,58.2 95.2,49.9 108.8,56.7 108.8,71.1 92.2,79.4 78.6,72.6" fill="#c9edf6" /><polygon points="78.6,58.2 92.2,65.0 92.2,79.4 78.6,72.6" fill="#bfe6f2" /><polygon points="92.2,65.0 108.8,56.7 108.8,71.1 92.2,79.4" fill="#d4f1f8" /><polygon points="43.8,46.9 49.1,49.1 49.1,54.4 43.8,52.2" fill="#f2fbfd" /></g><circle cx="479.1" cy="260.6" r="19.3" fill="none" stroke="#5a6a70" stroke-width="1"/><circle cx="479.1" cy="260.6" r="14" fill="#33282a"/><line x1="484" y1="263.7" x2="933.6" y2="544.5" stroke="#41ae72" stroke-width="2.1"/><rect x="478.4" y="247.5" width="1.4" height="2.6" fill="#8a8a8a"/><rect x="481.5" y="274.6" width="2.6" height="1.6" fill="#e8f4f4" transform="rotate(25 482.8 275.4)"/><circle cx="479.1" cy="260.6" r="6.3" fill="none" stroke="#3dbb6e" stroke-width="2"/><circle cx="479.1" cy="230.4" r="5" fill="none" stroke="#2f9a5c" stroke-width="1"/><circle cx="933.6" cy="544.5" r="4" fill="none" stroke="#7fae92" stroke-width="1"/><line x1="938.6" y1="547" x2="943" y2="549.8" stroke="#a8aeb0" stroke-width="1.2"/><circle cx="953.8" cy="556.9" r="11.2" fill="#3ec577"/><path d="M947.2 556.9h13.2M953.8 550.3v13.2" stroke="#06140b" stroke-width="2" fill="none"/><rect x="429.9" y="452.8" width="13.4" height="13.4" rx="2" fill="#3a3a3a" stroke="#f9a51a" stroke-width="2"/><polygon points="412,468.3 420.6,459 424.7,469.3" fill="#f9a51a"/><line x1="423" y1="464" x2="428.5" y2="462.4" stroke="#f9a51a" stroke-width="1.6"/></svg>
</div>
<div id="bottom" class="abs">
<div class="abs" style="left:8px;top:9px;width:767px;height:40px;overflow:hidden"><div class="sb" style="left:0;top:0;width:70px;background:linear-gradient(#ffac14,#f59d0c);color:#3a1d00">Start</div><div class="sb" style="left:80px;top:0">1</div><div class="sb" style="left:185px;top:0">2</div><div class="sb" style="left:290px;top:0">3</div><div class="sb" style="left:395px;top:0">3</div><div class="sb" style="left:500px;top:0">5</div><div class="sb" style="left:605px;top:0">4</div><div class="sb" style="left:710px;top:0">6</div></div><div class="abs" style="left:8px;top:45px;width:767px;height:7px;background:#1b1b1b"></div><div class="abs" style="left:8px;top:45px;width:721px;height:7px;background:#434343"></div><div class="abs" style="left:783px;top:0;width:2px;height:62px;background:#151515"></div><div class="tb" style="left:794px;top:15px;width:62px;height:30px"></div><svg class="abs" style="left:804px;top:24px" width="12" height="12" viewBox="0 0 12 12" ><path d="M6 0.8v10.4M0.8 6h10.4" stroke="#d6d6d6" stroke-width="2" fill="none"/></svg><span class="abs t" style="left:820px;top:22.6px;font-size:13px;line-height:15px;color:#c4c4c4">Add</span><div class="tb" style="left:866px;top:15px;width:30px;height:30px"></div><svg class="abs" style="left:875px;top:25px" width="12" height="10" viewBox="0 0 12 10" ><path d="M2 7.4L6 3.4L10 7.4" fill="none" stroke="#d6d6d6" stroke-width="2.2"/></svg>
</div>
<div id="right" class="abs">
<div class="lbl" style="top:19px">Start Distance</div><div class="inp" style="top:15px">0</div>
<div class="lbl" style="top:49px">End Distance</div><div class="inp" style="top:45px">1</div>
<div class="lbl" style="top:79px">Scene Distance</div><div class="inp" style="top:75px">1461.312</div>
<div class="lbl" style="top:109px">Play Cooldown</div><div class="inp" style="top:105px">0</div>
<div class="abs aw" style="left:7px;top:568px;font-size:20px;color:#8a8a8a;line-height:24px;white-space:nowrap">Activate Windows</div>
<div class="abs aw" style="left:7px;top:594px;font-size:15px;color:#8a8a8a;line-height:18px;white-space:nowrap">Go to Settings to activate Windows.</div>
</div>
</body></html>
